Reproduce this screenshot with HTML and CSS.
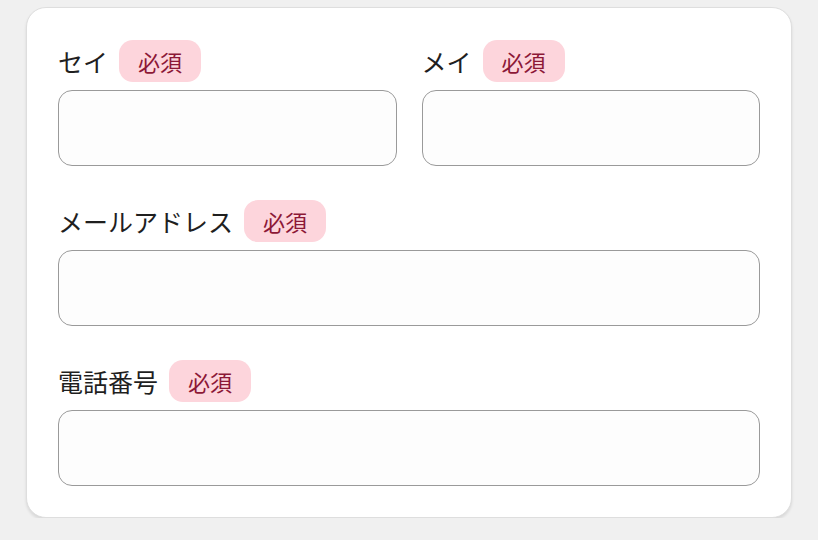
FILE: index.html
```html
<!DOCTYPE html>
<html lang="ja">
<head>
<meta charset="utf-8">
<link rel="stylesheet" href="styles.css">
</head>
<body>
<div class="card">
  <div class="row two">
    <div class="field">
      <div class="label"><span class="name">セイ</span><span class="badge">必須</span></div>
      <div class="input"></div>
    </div>
    <div class="field">
      <div class="label"><span class="name">メイ</span><span class="badge">必須</span></div>
      <div class="input"></div>
    </div>
  </div>
  <div class="field">
    <div class="label"><span class="name">メールアドレス</span><span class="badge">必須</span></div>
    <div class="input"></div>
  </div>
  <div class="field">
    <div class="label"><span class="name">電話番号</span><span class="badge">必須</span></div>
    <div class="input"></div>
  </div>
</div>
</body>
</html>
```
FILE: styles.css
```css
html, body {
  margin: 0;
  background: #f0f0f0;
}
body {
  padding: 7px 26px 0;
  font-family: "Noto Sans CJK JP", "Noto Sans", sans-serif;
}
.card {
  background: #fff;
  border: 1px solid #dedede;
  border-radius: 20px;
  box-shadow: 0 2px 3px rgba(0, 0, 0, 0.1);
  padding: 32px 31px 31px;
  display: flex;
  flex-direction: column;
  gap: 34px;
  box-sizing: border-box;
  height: 511px;
}
.row.two {
  display: grid;
  grid-template-columns: 1fr 1fr;
  column-gap: 25px;
}
.field {
  display: flex;
  flex-direction: column;
  gap: 8px;
}
.label {
  display: flex;
  align-items: center;
  gap: 11px;
  height: 42px;
}
.name {
  font-size: 25px;
  font-weight: 400;
  color: #1f1f1f;
  line-height: 1;
}
.badge {
  background: #fdd5dc;
  color: #8c1837;
  font-size: 22px;
  font-weight: 400;
  line-height: 42px;
  height: 42px;
  padding: 0 19px;
  border-radius: 14px;
}
.input {
  height: 76px;
  box-sizing: border-box;
  border: 1px solid #9a9a9a;
  border-radius: 14px;
  background: #fdfdfd;
}
```
